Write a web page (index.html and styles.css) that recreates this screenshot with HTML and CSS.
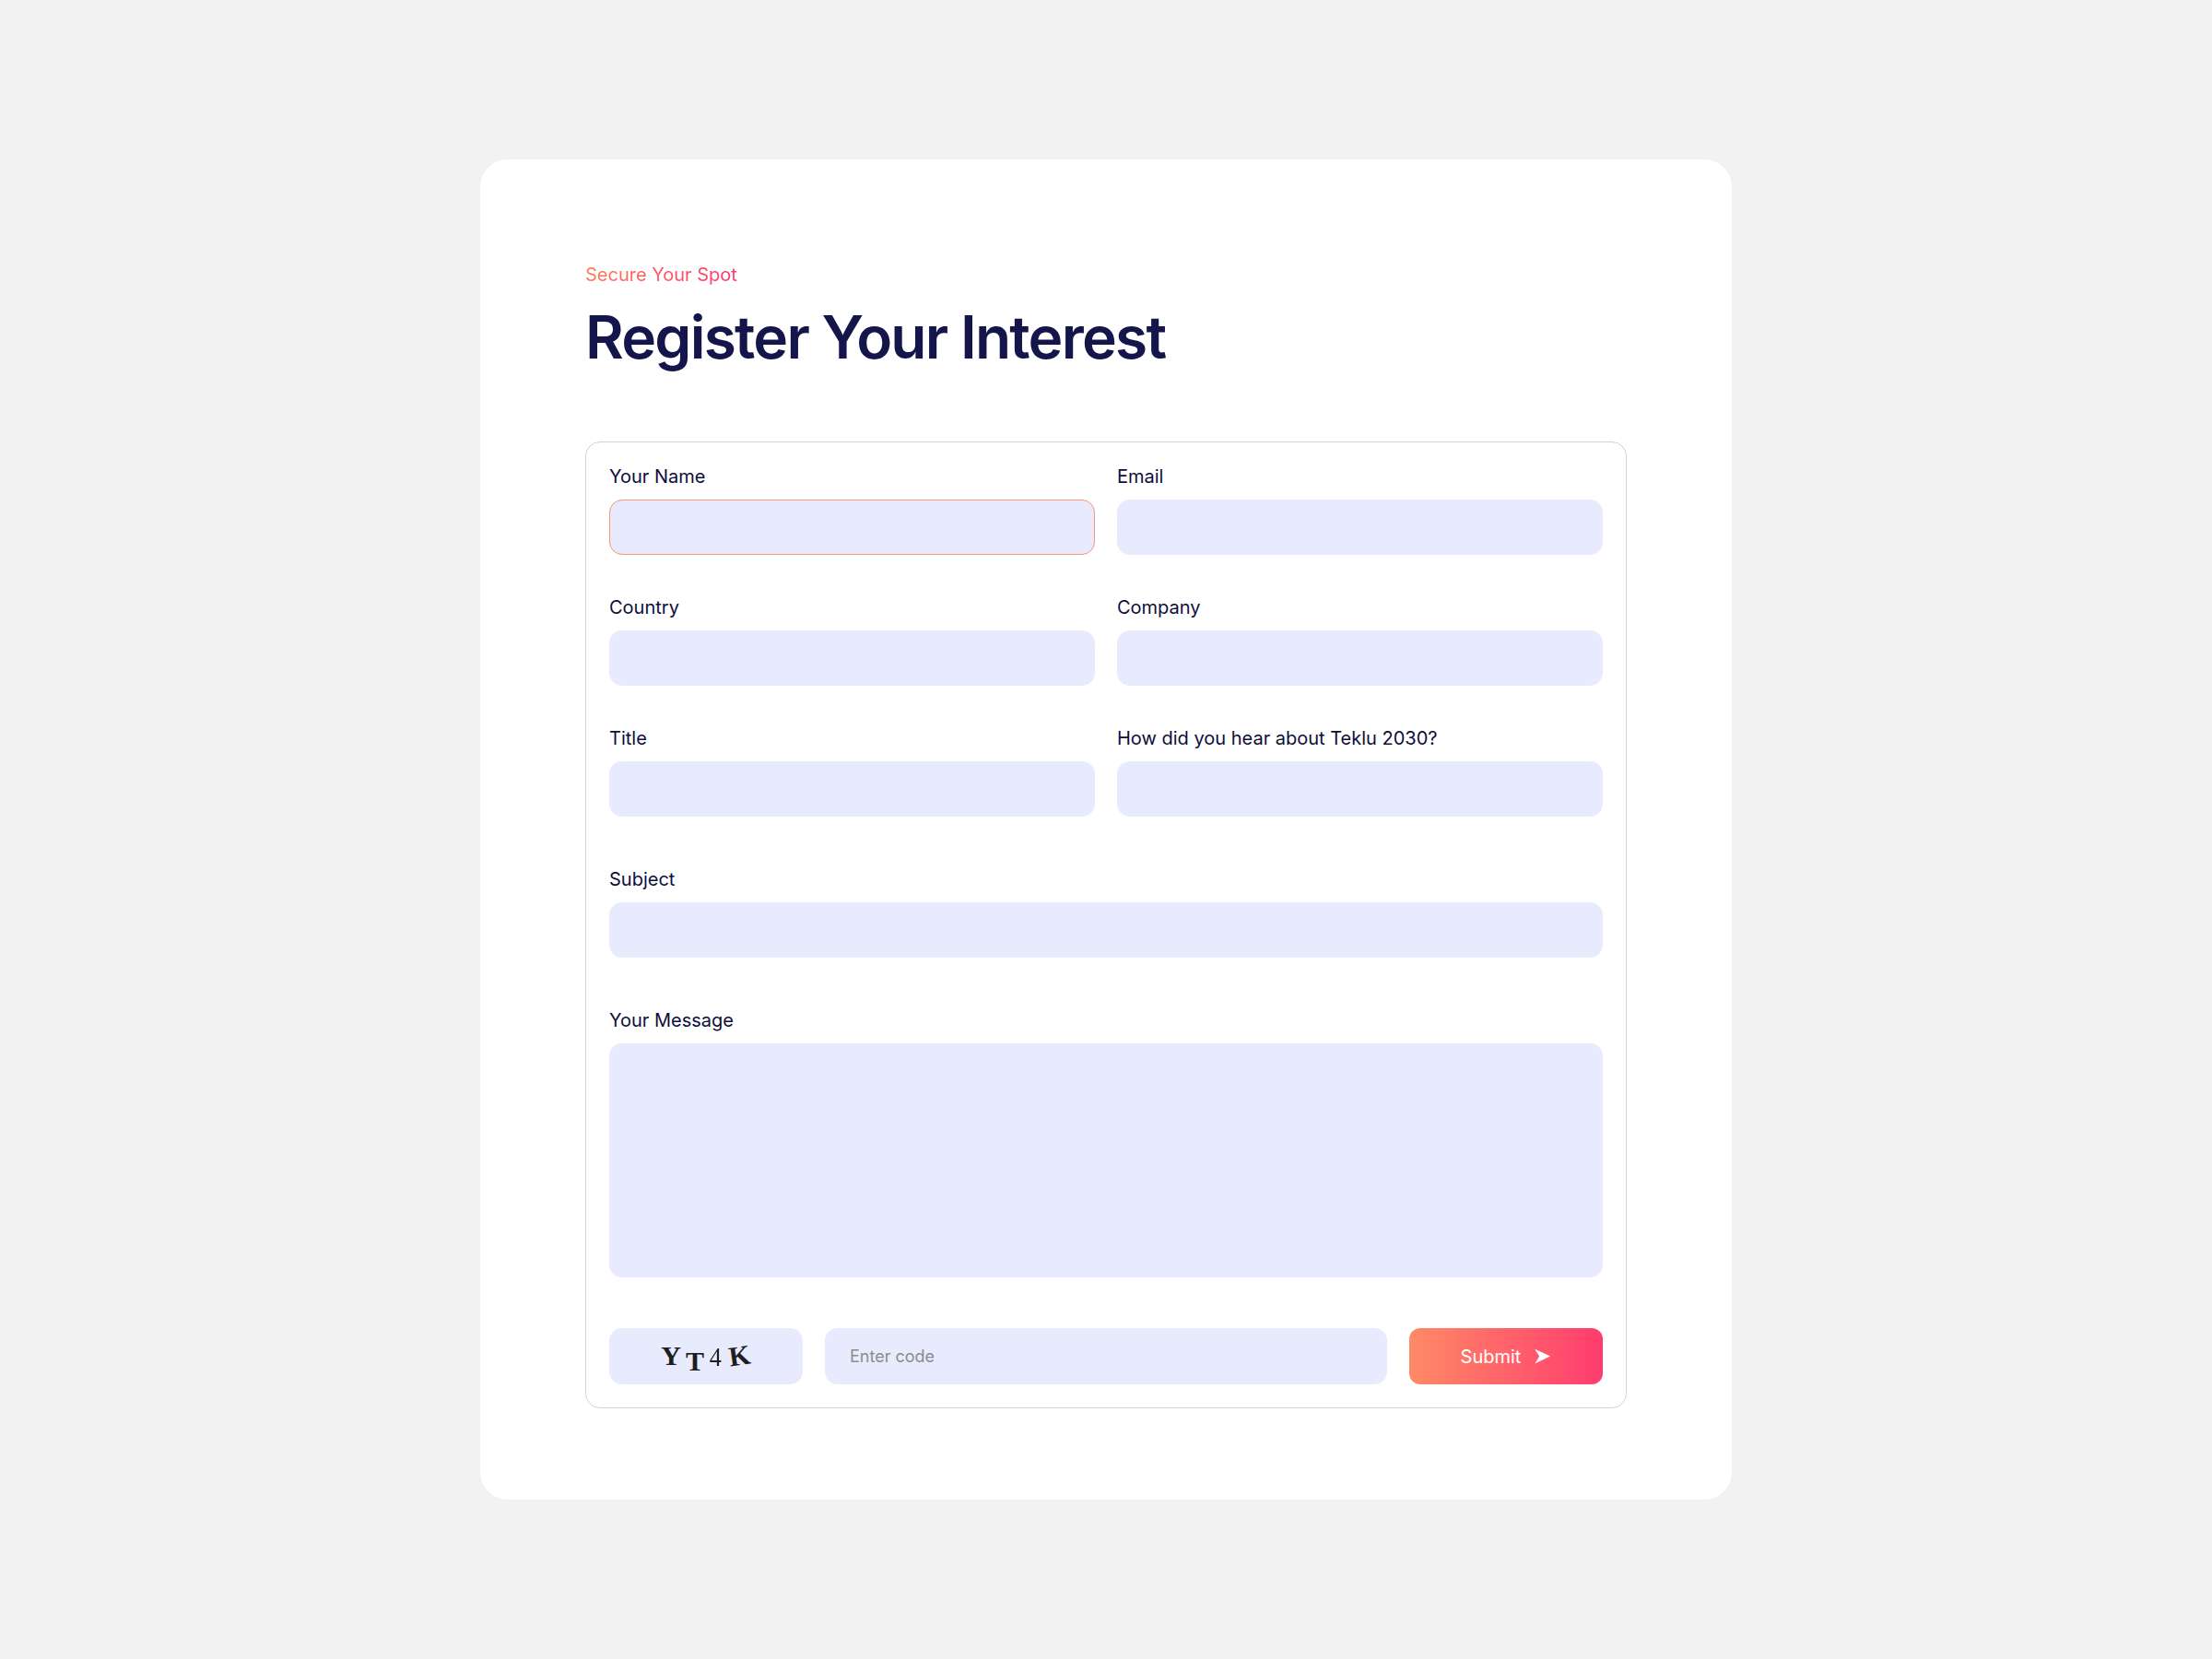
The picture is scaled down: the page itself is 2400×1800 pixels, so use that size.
FILE: index.html
```html
<!DOCTYPE html>
<html lang="en">

<head>
    <meta charset="UTF-8">
    <meta name="viewport" content="width=device-width, initial-scale=1.0">
    <title>Register Your Interest</title>
    <link rel="stylesheet" href="styles.css">
</head>

<body>
    <!-- Register Card -->
    <div class="register-card">
        <p class="eyebrow">Secure Your Spot</p>
        <h1 class="register-title">Register Your Interest</h1>

        <form class="register-form" action="#" method="POST">
            <div class="form-grid">
                <div class="field">
                    <label for="your-name">Your Name</label>
                    <input type="text" id="your-name" name="your-name" class="is-focused">
                </div>
                <div class="field">
                    <label for="email">Email</label>
                    <input type="email" id="email" name="email">
                </div>
                <div class="field">
                    <label for="country">Country</label>
                    <input type="text" id="country" name="country">
                </div>
                <div class="field">
                    <label for="company">Company</label>
                    <input type="text" id="company" name="company">
                </div>
                <div class="field">
                    <label for="title">Title</label>
                    <input type="text" id="title" name="title">
                </div>
                <div class="field">
                    <label for="source">How did you hear about Teklu 2030?</label>
                    <input type="text" id="source" name="source">
                </div>
            </div>

            <div class="field field-full">
                <label for="subject">Subject</label>
                <input type="text" id="subject" name="subject">
            </div>

            <div class="field field-full">
                <label for="message">Your Message</label>
                <textarea id="message" name="message"></textarea>
            </div>

            <!-- Captcha + Submit -->
            <div class="captcha-row">
                <div class="captcha-code" aria-label="Captcha code">
                    <span class="c-y">Y</span><span class="c-t">T</span><span class="c-4">4</span><span class="c-k">K</span>
                </div>
                <input type="text" class="captcha-input" name="captcha" placeholder="Enter code">
                <button type="submit" class="submit-btn">
                    Submit
                    <svg width="20" height="20" viewBox="0 0 20 20" aria-hidden="true">
                        <path d="M1 1.5 L19 10 L1.5 18.5 L6.5 10 Z" fill="#fff"/>
                    </svg>
                </button>
            </div>
        </form>
    </div>
</body>
</html>
```

FILE: styles.css
```css
/* General Styling */
* {
    box-sizing: border-box;
}

body {
    font-family: Inter, "Noto Sans", Arial, sans-serif;
    background-color: #f2f2f2;
    margin: 0;
    padding: 0;
    min-height: 100vh;
    display: flex;
    align-items: center;
    justify-content: center;
}

/* Card */
.register-card {
    background-color: #fff;
    width: 1358px;
    padding: 111px 114px 99px;
    border-radius: 30px;
}

.eyebrow {
    margin: 0;
    font-size: 20px;
    line-height: 28px;
    display: inline-block;
    background: linear-gradient(90deg, #ff7a55, #ff3570);
    -webkit-background-clip: text;
    background-clip: text;
    color: transparent;
}

.register-title {
    margin: 16px 0 0;
    font-size: 64px;
    line-height: 76px;
    font-weight: 600;
    letter-spacing: -0.027em;
    color: #14154a;
}

/* Form */
.register-form {
    margin-top: 75px;
    border: 1px solid #d2d2d2;
    border-radius: 16px;
    padding: 25px;
}

.form-grid {
    display: grid;
    grid-template-columns: 1fr 1fr;
    gap: 45px 24px;
}

.field label {
    display: block;
    font-size: 20px;
    line-height: 24px;
    font-weight: 400;
    color: #0d0e3a;
    margin-bottom: 13px;
}

.field-full {
    margin-top: 56px;
}

input,
textarea {
    display: block;
    width: 100%;
    height: 60px;
    padding: 0 26px;
    border: 1px solid transparent;
    border-radius: 14px;
    background-color: #e8ebfd;
    font-family: inherit;
    font-size: 18px;
    color: #14154a;
    outline: none;
}

input.is-focused {
    border: 1.5px solid #f8976f;
}

textarea {
    height: 254px;
    padding-top: 18px;
    resize: none;
}

/* Captcha row */
.captcha-row {
    margin-top: 55px;
    display: grid;
    grid-template-columns: 210px 1fr 210px;
    gap: 24px;
    height: 61px;
}

.captcha-code {
    background-color: #e8ebfd;
    border-radius: 14px;
    display: flex;
    align-items: center;
    justify-content: center;
    gap: 5px;
    font-family: "Liberation Serif", "DejaVu Serif", serif;
    font-weight: bold;
    color: #1e1e1e;
    padding-top: 2px;
}

.captcha-code span {
    display: inline-block;
}

.c-y {
    font-size: 30px;
    transform: translateY(-2px);
}

.c-t {
    font-size: 30px;
    transform: translateY(4px);
}

.c-4 {
    font-size: 29px;
    font-weight: normal;
    transform: scaleX(0.9);
}

.c-k {
    font-size: 30px;
    margin-left: 3px;
    transform: rotate(-8deg) translateY(-2px);
}

.captcha-input {
    height: 61px;
}

.captcha-input::placeholder {
    color: #8c8c8c;
}

.submit-btn {
    height: 61px;
    border: none;
    border-radius: 12px;
    background: linear-gradient(90deg, #ff8a66, #ff3c6e);
    color: #fff;
    font-family: inherit;
    font-size: 20px;
    font-weight: 400;
    display: flex;
    align-items: center;
    justify-content: center;
    gap: 14px;
    cursor: pointer;
}

.submit-btn svg {
    width: 19px;
    height: 19px;
}
```
